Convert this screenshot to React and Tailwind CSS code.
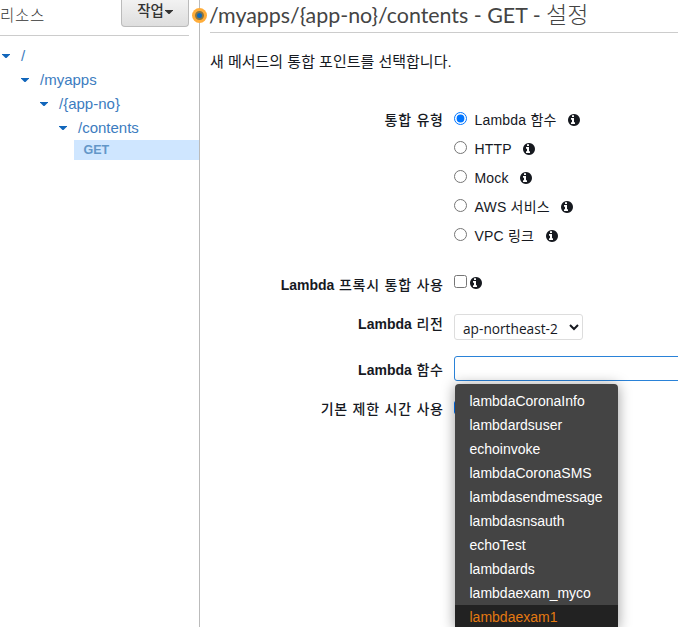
const resources = [
  { name: "/", pad: "pl-[2px]" },
  { name: "/myapps", pad: "pl-[21px]" },
  { name: "/{app-no}", pad: "pl-[40px]" },
  { name: "/contents", pad: "pl-[59px]" },
];

const types = [
  { name: "Lambda 함수", checked: true },
  { name: "HTTP" },
  { name: "Mock" },
  { name: "AWS 서비스" },
  { name: "VPC 링크" },
];

const lambdas = [
  "lambdaCoronaInfo",
  "lambdardsuser",
  "echoinvoke",
  "lambdaCoronaSMS",
  "lambdasendmessage",
  "lambdasnsauth",
  "echoTest",
  "lambdards",
  "lambdaexam_myco",
  "lambdaexam1",
];

function Caret({ className }) {
  return (
    <svg viewBox="0 0 8 4" className={`h-1 w-2 shrink-0 ${className}`} fill="currentColor">
      <path d="M0 0h8v.5L4.5 4h-1L0 .5z" />
    </svg>
  );
}

function Info({ className = "" }) {
  return (
    <svg viewBox="128 128 1536 1536" fill="currentColor" className={`size-3 shrink-0 text-[#16191f] ${className}`}>
      <path d="M1024 1376v-160q0-14-9-23t-23-9h-96v-512q0-14-9-23t-23-9h-320q-14 0-23 9t-9 23v160q0 14 9 23t23 9h96v320h-96q-14 0-23 9t-9 23v160q0 14 9 23t23 9h448q14 0 23-9t9-23zm-128-896v-160q0-14-9-23t-23-9h-192q-14 0-23 9t-9 23v160q0 14 9 23t23 9h192q14 0 23-9t9-23zm768 416q0 209-103 385.5t-279.5 279.5-385.5 103-385.5-103-279.5-279.5-103-385.5 103-385.5 279.5-279.5 385.5-103 385.5 103 279.5 279.5 103 385.5z" />
    </svg>
  );
}

function Label({ latin, children, className = "" }) {
  return (
    <div className={`w-[233px] shrink-0 text-right font-bold whitespace-nowrap ${className}`}>
      {latin}
      <span className="-mr-[0.7px] font-medium tracking-[0.75px]">
        {latin ? " " : ""}
        {children}
      </span>
    </div>
  );
}

function Sidebar() {
  return (
    <aside className="h-full w-[200px] shrink-0 border-r border-[#bbb]">
      <div className="flex h-9 w-[189px] items-start justify-between border-b border-[#ccc]">
        <span className="pt-1.5 text-[15.5px] leading-5 font-light tracking-[0.7px] text-[#333]">리소스</span>
        <button className="flex h-[27px] w-[68px] items-center justify-center gap-px rounded-b border border-t-0 border-[#bbb] bg-linear-to-b from-[#f2f2f2] to-[#dedede] pb-[5px] text-[14.5px] leading-5 font-medium text-[#333]">
          작업
          <Caret className="mt-[3px]" />
        </button>
      </div>
      <ul className="pt-2 text-[15px] text-[#3c7cc0]">
        {resources.map((r) => (
          <li key={r.name} className={`flex h-6 items-center ${r.pad}`}>
            <Caret className="mr-px -mt-px text-[#1166bb]" />
            <span className="pl-[10px]">{r.name}</span>
          </li>
        ))}
        <li className="ml-[74px] flex h-5 items-center bg-[#cfe6ff] pt-px pl-[9.5px] text-[12.5px] font-bold text-[#6296c8]">
          GET
        </li>
      </ul>
    </aside>
  );
}

export default function App() {
  return (
    <div className="relative flex h-[627px] w-[678px] overflow-hidden bg-white font-['Liberation_Sans','Noto_Sans_CJK_KR',sans-serif] text-sm text-[#16191f]">
      <Sidebar />
      <main className="min-w-0 flex-1 pl-[10px]">
        <h1 className="h-[33px] border-b border-[#ccc] font-['Lato','Noto_Sans_CJK_KR',sans-serif] text-[21.4px] leading-[30px] whitespace-nowrap text-[#444]">
          <span className="-ml-px">/myapps/{"{app-no}"}/contents - GET - </span>
          <span className="text-[23px] leading-7 font-light">설정</span>
        </h1>
        <p className="mt-[19px] h-5 text-[15px] leading-5">새 메서드의 통합 포인트를 선택합니다.</p>

        <div className="mt-[37px] flex h-[145px] gap-[11px] leading-5">
          <Label className="pt-px">통합 유형</Label>
          <div>
            {types.map((t) => (
              <label key={t.name} className="flex h-[29px] items-start">
                <input type="radio" name="type" defaultChecked={t.checked} className="mt-[3px] size-[13px]" />
                <span className="pt-px pl-[7.5px] tracking-[0.2px]">{t.name}</span>
                <Info className="mt-[5px] ml-[11.5px]" />
              </label>
            ))}
          </div>
        </div>

        <div className="mt-5 flex h-5 gap-[11px] leading-5">
          <Label latin="Lambda" className="pt-px">프록시 통합 사용</Label>
          <div className="flex">
            <input type="checkbox" className="mt-px size-[13px]" />
            <Info className="mt-[3px] ml-[3px]" />
          </div>
        </div>

        <div className="mt-5 flex h-[26px] gap-[11px] leading-5">
          <Label latin="Lambda">리전</Label>
          <select className="h-[26px] w-[129px] rounded-[3px] border border-[#ddd] bg-white pt-[3px] pl-1 font-['Open_Sans',sans-serif] text-[13.7px]">
            <option>ap-northeast-2</option>
          </select>
        </div>

        <div className="mt-4 flex h-[25px] items-start gap-[11px] leading-5">
          <Label latin="Lambda" className="pt-1">함수</Label>
          <input className="h-[25px] w-[300px] shrink-0 rounded-l-[3px] border border-[#2a82d8] outline-none" />
        </div>

        <div className="mt-[18px] flex gap-[11px] leading-5">
          <Label>기본 제한 시간 사용</Label>
          <input type="checkbox" defaultChecked className="mt-0.5 size-[13px]" />
        </div>
      </main>

      <div className="absolute top-2 left-[192px] flex size-[15px] items-center justify-center rounded-full bg-[#ffad3a]">
        <div className="size-[9px] rounded-full border-2 border-[#8a7542] bg-[#0b68bd]" />
      </div>

      <ul className="absolute top-[384px] left-[455px] w-[163px] rounded-[4px] bg-[#444] pt-[5px] text-white shadow-[0_1px_14px_rgba(0,0,0,0.4)]">
        {lambdas.map((n) => (
          <li
            key={n}
            className="flex h-6 items-center pl-[14.5px] last:bg-[#222] last:text-[#e47911]"
          >
            {n}
          </li>
        ))}
      </ul>
    </div>
  );
}
